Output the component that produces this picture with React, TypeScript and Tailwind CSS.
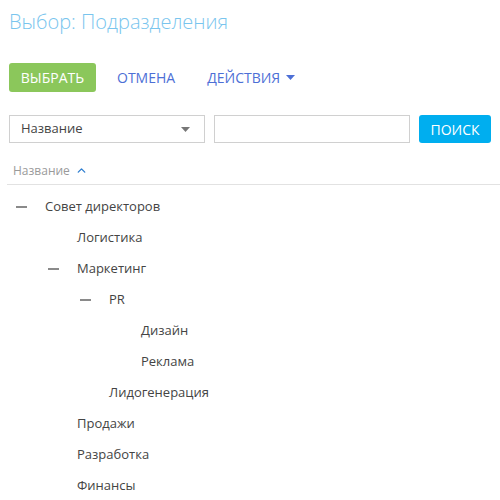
import { ChevronUp } from "lucide-react";

type Node = { label: string; level: number; open?: boolean };

const TREE: Node[] = [
  { label: "Совет директоров", level: 0, open: true },
  { label: "Логистика", level: 1 },
  { label: "Маркетинг", level: 1, open: true },
  { label: "PR", level: 2, open: true },
  { label: "Дизайн", level: 3 },
  { label: "Реклама", level: 3 },
  { label: "Лидогенерация", level: 2 },
  { label: "Продажи", level: 1 },
  { label: "Разработка", level: 1 },
  { label: "Финансы", level: 1 },
];

const INDENT = ["pl-[16px]", "pl-[48px]", "pl-[80px]", "pl-[112px]"];

function Caret({ className }: { className?: string }) {
  return (
    <svg width="9" height="5" viewBox="0 0 9 5" className={className}>
      <path d="M0 0h9L4.5 5z" fill="currentColor" />
    </svg>
  );
}

function TreeRow({ node }: { node: Node }) {
  return (
    <div className={`flex items-center h-[31px] ${INDENT[node.level]}`}>
      <span className="w-[29px] flex items-center">
        {node.open && <span className="block w-[11px] h-[2px] bg-[#8a8a8a]" />}
      </span>
      <span className="text-[13px] text-[#444]">{node.label}</span>
    </div>
  );
}

export default function App() {
  return (
    <div className="w-[500px] h-[500px] bg-white overflow-hidden font-['Open_Sans',sans-serif]">
      <h1 className="pl-[9px] pt-[7px] text-[20px] font-light leading-[30px] text-[#79c5ee]">
        Выбор: Подразделения
      </h1>

      <div className="flex items-center mt-[26px] pl-[9px]">
        <button className="h-[29px] w-[87px] rounded-[3px] bg-[#8bc75b] text-white text-[14px]">
          ВЫБРАТЬ
        </button>
        <button className="ml-[21px] text-[14px] text-[#4d6fd6]">
          ОТМЕНА
        </button>
        <button className="ml-[32px] flex items-center gap-[6px] text-[14px] text-[#4d6fd6]">
          ДЕЙСТВИЯ
          <Caret />
        </button>
      </div>

      <div className="flex items-center mt-[23px] pl-[9px]">
        <div className="w-[196px] h-[28px] border border-[#d0d0d0] flex items-center justify-between pl-[11px] pr-[14px]">
          <span className="text-[13px] text-[#444]">Название</span>
          <Caret className="text-[#777]" />
        </div>
        <div className="ml-[9px] w-[196px] h-[28px] border border-[#d0d0d0]" />
        <button className="ml-[9px] w-[72px] h-[28px] rounded-[3px] bg-[#00aeef] text-white text-[14px]">
          ПОИСК
        </button>
      </div>

      <div className="mt-[15px] ml-[7px] h-[27px] border-b border-[#e2e2e2] flex items-center pl-[6px] pb-[1px]">
        <span className="text-[12px] text-[#9a9a9a]">Название</span>
        <ChevronUp size={13} strokeWidth={2.5} className="ml-[5px] text-[#2f7fd0]" />
      </div>

      <div className="pt-[6px]">
        {TREE.map((n) => (
          <TreeRow key={n.label} node={n} />
        ))}
      </div>
    </div>
  );
}
